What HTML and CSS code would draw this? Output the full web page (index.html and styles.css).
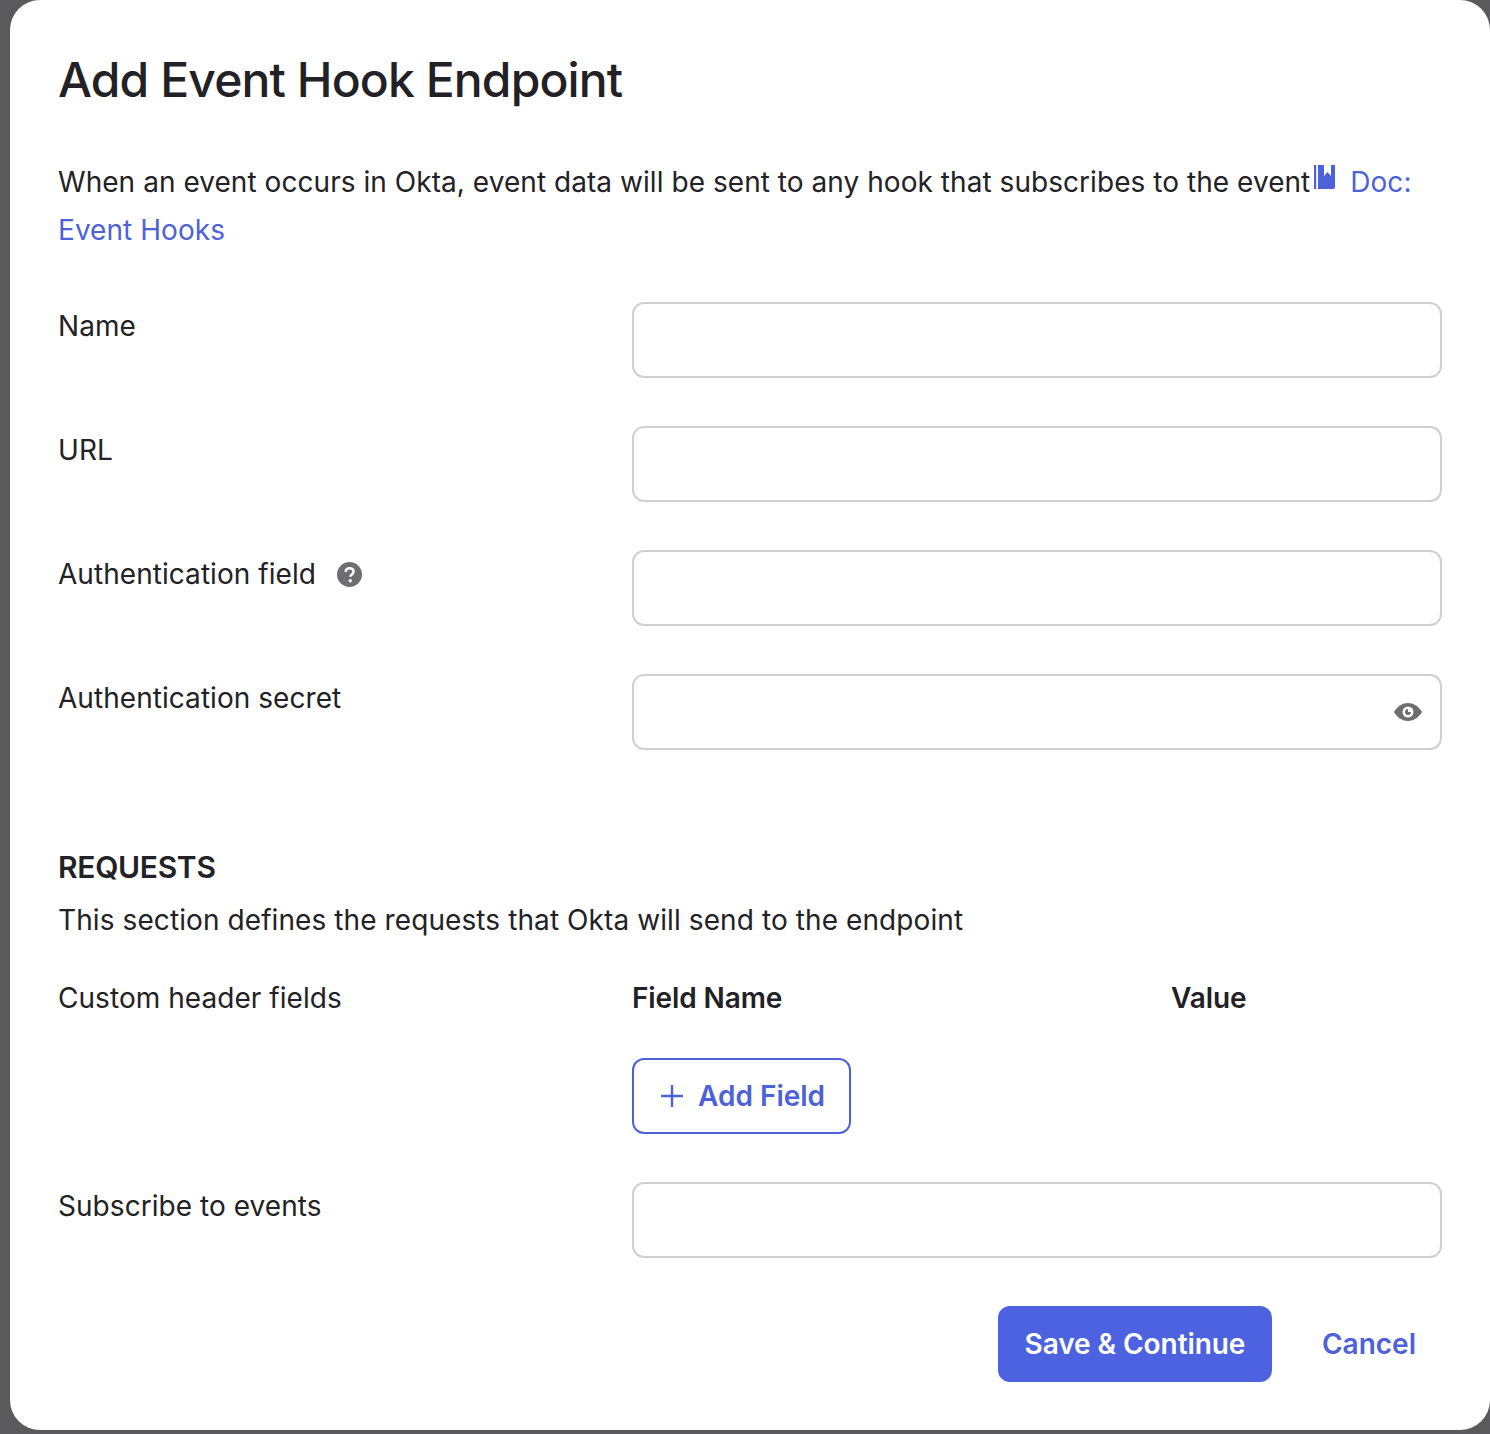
FILE: index.html
```html
<!DOCTYPE html>
<html lang="en">

<head>
    <meta charset="UTF-8">
    <meta name="viewport" content="width=device-width, initial-scale=1.0">
    <title>Add Event Hook Endpoint</title>
    <link rel="stylesheet" href="styles.css">
</head>

<body>

    <div class="modal">
        <h1 class="title">Add Event Hook Endpoint</h1>

        <p class="intro">When an event occurs in Okta, event data will be sent to any hook that subscribes to the event<svg class="book-icon" viewBox="0 0 21 24" aria-hidden="true"><path d="M0 0h2.200v24H0z" /><path d="M4 0h6v11l3.500-4 3.500 4V0h4v22a2 2 0 0 1-2 2H4z" /></svg> <a href="#" class="link">Doc:</a> <a href="#" class="link">Event Hooks</a></p>

        <form class="fields">
            <div class="row">
                <label class="label" for="name">Name</label>
                <input class="input" type="text" id="name">
            </div>
            <div class="row">
                <label class="label" for="url">URL</label>
                <input class="input" type="text" id="url">
            </div>
            <div class="row">
                <label class="label" for="authfield">Authentication field
                    <svg class="help-icon" viewBox="0 0 24 24" aria-hidden="true">
                        <circle cx="12" cy="12" r="12" fill="#6e6e72" />
                        <path d="M8.200 9.400c.2-2.200 1.800-3.400 3.900-3.400 2.200 0 3.800 1.300 3.800 3.200 0 1.500-.9 2.300-1.900 3-.9.600-1.200 1-1.200 2" fill="none" stroke="#fff" stroke-width="2.400" />
                        <circle cx="12.700" cy="18" r="1.600" fill="#fff" />
                    </svg>
                </label>
                <input class="input" type="text" id="authfield">
            </div>
            <div class="row">
                <label class="label" for="secret">Authentication secret</label>
                <div class="secret-wrap">
                    <input class="input" type="password" id="secret">
                    <svg class="eye-icon" viewBox="0 0 28 18" aria-hidden="true">
                        <path fill-rule="evenodd" fill="#6e6e72" d="M14 0c6.500 0 11.500 4.500 14 9-2.500 4.500-7.500 9-14 9S2.500 13.500 0 9C2.500 4.500 7.500 0 14 0zm0 3.500a5.500 5.500 0 1 0 0 11 5.500 5.500 0 0 0 0-11z" />
                        <path fill="#6e6e72" d="M14 6a3 3 0 1 0 3 3h-3z" />
                    </svg>
                </div>
            </div>

            <div class="requests">
                <h2 class="section-title">REQUESTS</h2>
                <p class="section-text">This section defines the requests that Okta will send to the endpoint</p>
            </div>

            <div class="row row-headers">
                <span class="label">Custom header fields</span>
                <div class="columns">
                    <span class="col-name">Field Name</span>
                    <span class="col-value">Value</span>
                </div>
            </div>
            <div class="row row-add">
                <span class="label"></span>
                <button type="button" class="btn-add">
                    <svg class="plus-icon" viewBox="0 0 22 22" aria-hidden="true"><path d="M11 0v22M0 11h22" fill="none" stroke="currentColor" stroke-width="2.400" /></svg>
                    Add Field
                </button>
            </div>
            <div class="row">
                <label class="label" for="events">Subscribe to events</label>
                <input class="input" type="text" id="events">
            </div>

            <div class="footer">
                <button type="button" class="btn-save">Save &amp; Continue</button>
                <button type="button" class="btn-cancel">Cancel</button>
            </div>
        </form>
    </div>

</body>

</html>
```

FILE: styles.css
```css
html,
body {
    height: 100%;
}

body {
    font-family: 'Inter', 'Liberation Sans', sans-serif;
    background-color: #5a5a5c;
    color: #222226;
    margin: 0;
    overflow: hidden;
}

.modal {
    box-sizing: border-box;
    height: 1430px;
    margin-left: 10px;
    padding: 52px 48px 48px;
    background-color: #fff;
    border-radius: 30px;
    font-size: 28px;
    line-height: 48px;
    letter-spacing: 0.05px;
}

.title {
    margin: 0 0 50px;
    font-size: 48px;
    line-height: 56px;
    font-weight: 500;
    letter-spacing: -0.88px;
}

.intro {
    margin: 0 0 48px;
}

.link {
    color: #4d62d9;
    text-decoration: none;
}

.book-icon {
    width: 21px;
    height: 24px;
    fill: #4d62d9;
    margin-left: 4px;
    margin-right: 7px;
    vertical-align: 3px;
}

.fields {
    display: flex;
    flex-direction: column;
    gap: 48px;
}

.row {
    display: flex;
}

.label {
    width: 574px;
    flex-shrink: 0;
}

.input {
    display: block;
    box-sizing: border-box;
    width: 810px;
    height: 76px;
    padding: 0 24px;
    background-color: #fff;
    border: 2px solid #d0d0d3;
    border-radius: 12px;
    font: inherit;
}

.help-icon {
    width: 25px;
    height: 25px;
    margin-left: 13px;
    vertical-align: -3px;
}

.secret-wrap {
    position: relative;
}

.eye-icon {
    position: absolute;
    top: 29px;
    right: 20px;
    width: 28px;
    height: 18px;
}

.requests {
    margin-top: 49px;
    margin-bottom: -18px;
}

.section-title {
    margin: 0 0 9px;
    font-size: 30px;
    line-height: 40px;
    font-weight: 600;
    letter-spacing: -0.3px;
}

.section-text {
    margin: 0;
    letter-spacing: 0.09px;
}

.row-headers {
    margin-bottom: -12px;
}

.columns {
    display: flex;
    width: 810px;
    font-weight: 600;
    letter-spacing: -0.1px;
}

.col-name {
    width: 539px;
}

.btn-add {
    display: flex;
    align-items: center;
    gap: 15px;
    box-sizing: border-box;
    height: 76px;
    width: 219px;
    padding: 0 0 0 27px;
    background-color: #fff;
    color: #4d62d9;
    border: 2px solid #4d62d9;
    border-radius: 12px;
    font: inherit;
    font-weight: 600;
    letter-spacing: 0;
}

.plus-icon {
    width: 22px;
    height: 22px;
}

.footer {
    display: flex;
    justify-content: flex-end;
    align-items: center;
    gap: 50px;
    padding-right: 26px;
}

.btn-save {
    width: 274px;
    height: 76px;
    padding: 0;
    background-color: #4d62e0;
    color: #fff;
    border: none;
    border-radius: 12px;
    font: inherit;
    font-weight: 600;
    letter-spacing: -0.07px;
}

.btn-cancel {
    padding: 0;
    background: none;
    color: #4d62d9;
    border: none;
    font: inherit;
    font-weight: 600;
    letter-spacing: 0;
}
```
